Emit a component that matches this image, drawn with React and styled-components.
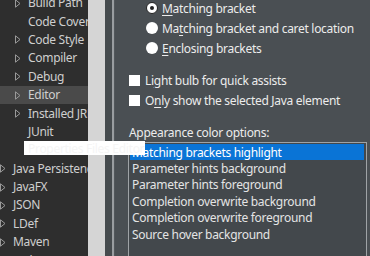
import React from "react";
import styled, { createGlobalStyle } from "styled-components";

const Global = createGlobalStyle`
  html, body { margin: 0; padding: 0; background: #2d2d2d; }
  body { font-family: "Noto Sans", "Open Sans", sans-serif; }
`;

const Root = styled.div`
  position: relative;
  width: 370px;
  height: 256px;
  overflow: hidden;
  display: flex;
  font-family: "Noto Sans", "Open Sans", sans-serif;
  font-size: 12px;
  letter-spacing: -0.3px;
`;

const Tree = styled.div`
  width: 88px;
  flex: none;
  background: #2e2e2e;
  display: flex;
  flex-direction: column;
  margin-top: -6px;
  overflow: hidden;
`;

const Row = styled.div`
  height: 18.4px;
  flex: none;
  display: flex;
  align-items: center;
  padding-left: ${(p) => (p.$level === 1 ? 15 : 0)}px;
  background: ${(p) => (p.$selected ? "#4a4a4a" : "transparent")};
  color: #cfcfcf;
  white-space: nowrap;
`;

const Twisty = styled.span`
  width: 13px;
  flex: none;
  display: flex;
  align-items: center;
`;

const Label = styled.span`
  line-height: 1;
  visibility: ${(p) => (p.$covered ? "hidden" : "visible")};
`;

const Track = styled.div`
  width: 17px;
  flex: none;
  background: #d5d5d5;
`;

const Sash = styled.div`
  width: 7px;
  flex: none;
  background: #464b4e;
`;

const Edge = styled.div`
  width: 2px;
  flex: none;
  background: #999da0;
`;

const Page = styled.div`
  flex: 1;
  background: #4a4f53;
  color: #ececec;
  display: flex;
  flex-direction: column;
  padding-left: 14px;
  border-left: 1px solid #52575b;
`;

const RadioGroup = styled.div`
  display: flex;
  flex-direction: column;
  padding-left: 17px;
  margin-top: -2px;
`;

const OptRow = styled.div`
  height: 20px;
  display: flex;
  align-items: center;
  white-space: nowrap;
`;

const RadioDot = styled.span`
  width: 12px;
  height: 12px;
  border-radius: 50%;
  background: #ffffff;
  box-sizing: border-box;
  margin-right: 4px;
  flex: none;
  border: ${(p) => (p.$checked ? "1.3px solid #222" : "none")};
  display: flex;
  align-items: center;
  justify-content: center;
  &::after {
    content: "";
    display: ${(p) => (p.$checked ? "block" : "none")};
    width: 4px;
    height: 4px;
    border-radius: 50%;
    background: #222;
  }
`;

const CheckGroup = styled.div`
  display: flex;
  flex-direction: column;
  margin-top: 12px;
`;

const Box = styled.span`
  width: 11px;
  height: 11px;
  background: #ffffff;
  margin-right: 5px;
  flex: none;
`;

const U = styled.span`
  text-decoration: underline;
  text-underline-offset: 2px;
`;

const Caption = styled.div`
  margin-top: 14px;
  height: 16px;
  display: flex;
  align-items: center;
  white-space: nowrap;
`;

const List = styled.div`
  margin-top: 2px;
  margin-right: 3px;
  margin-left: -1px;
  flex: 1;
  border: 1px solid #9fa3a6;
  border-bottom: none;
  background: #43484c;
  padding: 1px 2px 0 1px;
  display: flex;
  flex-direction: column;
`;

const Item = styled.div`
  height: 16.4px;
  flex: none;
  display: flex;
  align-items: center;
  padding-left: 2px;
  white-space: nowrap;
  color: ${(p) => (p.$selected ? "#ffffff" : "#e4e4e4")};
  background: ${(p) => (p.$selected ? "#0a74d6" : "transparent")};
`;

const Tip = styled.div`
  position: absolute;
  left: 24px;
  top: 141px;
  width: 121px;
  height: 14px;
  background: #ffffff;
  color: #f5f5f5;
  font-size: 12px;
  display: flex;
  align-items: center;
  padding-left: 4px;
  box-sizing: border-box;
  white-space: nowrap;
  overflow: hidden;
`;

const Arrow = () => (
  <svg width="6" height="9" viewBox="0 0 6 9">
    <path d="M0.5 0.8 L5 4.5 L0.5 8.2 Z" fill="none" stroke="#9a9a9a" strokeWidth="1" />
  </svg>
);

const treeRows = [
  { t: "Build Path", l: 1, a: true },
  { t: "Code Coverage", l: 1, a: false },
  { t: "Code Style", l: 1, a: true },
  { t: "Compiler", l: 1, a: true },
  { t: "Debug", l: 1, a: true },
  { t: "Editor", l: 1, a: true, s: true },
  { t: "Installed JREs", l: 1, a: true },
  { t: "JUnit", l: 1, a: false },
  { t: "Properties Files Editor", l: 1, a: false, c: true },
  { t: "Java Persistence", l: 0, a: true },
  { t: "JavaFX", l: 0, a: true },
  { t: "JSON", l: 0, a: true },
  { t: "LDef", l: 0, a: true },
  { t: "Maven", l: 0, a: true },
  { t: "Mylyn", l: 0, a: true },
];

const items = [
  "Matching brackets highlight",
  "Parameter hints background",
  "Parameter hints foreground",
  "Completion overwrite background",
  "Completion overwrite foreground",
  "Source hover background",
];

export default function App() {
  return (
    <>
      <Global />
      <Root>
        <Tree>
          {treeRows.map((r) => (
            <Row key={r.t} $level={r.l} $selected={r.s}>
              <Twisty>{r.a ? <Arrow /> : null}</Twisty>
              <Label $covered={r.c}>{r.t}</Label>
            </Row>
          ))}
        </Tree>
        <Track />
        <Sash />
        <Edge />
        <Page>
          <RadioGroup>
            <OptRow>
              <RadioDot $checked />
              <span><U>M</U>atching bracket</span>
            </OptRow>
            <OptRow>
              <RadioDot />
              <span>Ma<U>t</U>ching bracket and caret location</span>
            </OptRow>
            <OptRow>
              <RadioDot />
              <span><U>E</U>nclosing brackets</span>
            </OptRow>
          </RadioGroup>
          <CheckGroup>
            <OptRow>
              <Box />
              <span>Li<U>g</U>ht bulb for quick assists</span>
            </OptRow>
            <OptRow>
              <Box />
              <span>O<U>n</U>ly show the selected Java element</span>
            </OptRow>
          </CheckGroup>
          <Caption>Appearance color options:</Caption>
          <List>
            {items.map((t, i) => (
              <Item key={t} $selected={i === 0}>{t}</Item>
            ))}
          </List>
        </Page>
        <Tip>Properties Files Editor</Tip>
      </Root>
    </>
  );
}
